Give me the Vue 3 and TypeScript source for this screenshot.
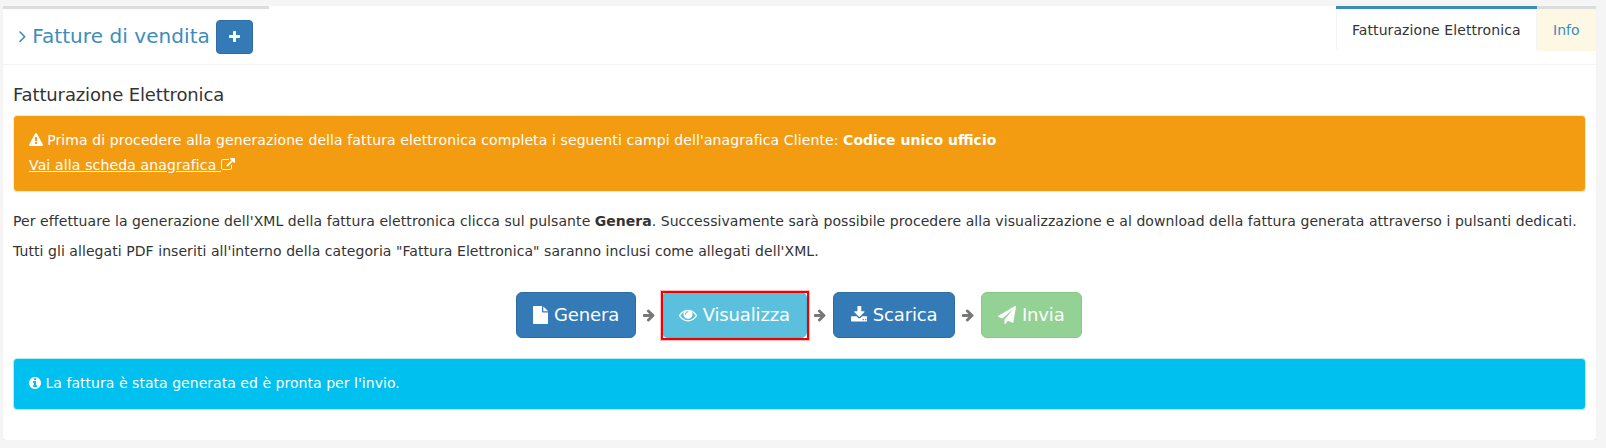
<script setup lang="ts">
import { h, type FunctionalComponent } from 'vue'

interface Glyph {
  x: number
  w: number
  d: string
}

const glyphs: Record<string, Glyph> = {
  angle: { x: 576, w: 640, d: 'M1171 960q0 13-10 23l-466 466q-10 10-23 10t-23-10l-50-50q-10-10-10-23t10-23l393-393-393-393q-10-10-10-23t10-23l50-50q10-10 23-10t23 10l466 466q10 10 10 23z' },
  plus: { x: 192, w: 1408, d: 'M1600 736v192q0 40-28 68t-68 28h-416v416q0 40-28 68t-68 28h-192q-40 0-68-28t-28-68v-416h-416q-40 0-68-28t-28-68v-192q0-40 28-68t68-28h416v-416q0-40 28-68t68-28h192q40 0 68 28t28 68v416h416q40 0 68 28t28 68z' },
  warning: { x: 0, w: 1792, d: 'M1024 1375v-190q0-14-9.5-23.5t-22.5-9.5h-192q-13 0-22.5 9.5t-9.5 23.5v190q0 14 9.5 23.5t22.5 9.5h192q13 0 22.5-9.5t9.5-23.5zm-2-374l18-459q0-12-10-19-13-11-24-11h-220q-11 0-24 11-10 7-10 21l17 457q0 10 10 16.5t24 6.5h185q14 0 23.5-6.5t10.5-16.5zm-14-934l768 1408q35 63-2 126-17 29-46.5 46t-63.5 17h-1536q-34 0-63.5-17t-46.5-46q-37-63-2-126l768-1408q17-31 47-49t65-18 65 18 47 49z' },
  external: { x: 0, w: 1792, d: 'M1408 928v320q0 119-84.5 203.5t-203.5 84.5h-832q-119 0-203.5-84.5t-84.5-203.5v-832q0-119 84.5-203.5t203.5-84.5h704q14 0 23 9t9 23v64q0 14-9 23t-23 9h-704q-66 0-113 47t-47 113v832q0 66 47 113t113 47h832q66 0 113-47t47-113v-320q0-14 9-23t23-9h64q14 0 23 9t9 23zm384-864v512q0 26-19 45t-45 19-45-19l-176-176-652 652q-10 10-23 10t-23-10l-114-114q-10-10-10-23t10-23l652-652-176-176q-19-19-19-45t19-45 45-19h512q26 0 45 19t19 45z' },
  file: { x: 128, w: 1536, d: 'M1152 512v-472q22 14 36 28l408 408q14 14 28 36h-472zm-128 32q0 40 28 68t68 28h544v1056q0 40-28 68t-68 28h-1344q-40 0-68-28t-28-68v-1600q0-40 28-68t68-28h800v544z' },
  eye: { x: 0, w: 1792, d: 'M1664 960q-152-236-381-353 61 104 61 225 0 185-131.5 316.5t-316.5 131.5-316.5-131.5-131.5-316.5q0-121 61-225-229 117-381 353 133 205 333.5 326.5t434.5 121.5 434.5-121.5 333.5-326.5zm-720-384q0-20-14-34t-34-14q-125 0-214.5 89.5t-89.5 214.5q0 20 14 34t34 14 34-14 14-34q0-86 61-147t147-61q20 0 34-14t14-34zm848 384q0 34-20 69-140 230-376.5 368.5t-499.5 138.5-499.5-139-376.5-368q-20-35-20-69t20-69q140-229 376.5-368t499.5-139 499.5 139 376.5 368q20 35 20 69z' },
  download: { x: 64, w: 1664, d: 'M1344 1344q0-26-19-45t-45-19-45 19-19 45 19 45 45 19 45-19 19-45zm256 0q0-26-19-45t-45-19-45 19-19 45 19 45 45 19 45-19 19-45zm128-224v320q0 40-28 68t-68 28h-1472q-40 0-68-28t-28-68v-320q0-40 28-68t68-28h465l135 136q58 56 136 56t136-56l136-136h464q40 0 68 28t28 68zm-325-569q17 41-14 70l-448 448q-18 19-45 19t-45-19l-448-448q-31-29-14-70 17-39 59-39h256v-448q0-26 19-45t45-19h256q26 0 45 19t19 45v448h256q42 0 59 39z' },
  plane: { x: 0, w: 1792, d: 'M1764 11q33 24 27 64l-256 1536q-5 29-32 45-14 8-31 8-11 0-24-5l-453-185-242 295q-18 23-49 23-13 0-22-4-19-7-30.5-23.5t-11.5-36.5v-349l864-1059-1069 925-395-162q-37-14-40-55-2-40 32-59l1664-960q15-9 32-9 20 0 36 11z' },
  arrow: { x: 128, w: 1536, d: 'M1600 960q0 54-37 91l-651 651q-39 37-91 37-51 0-90-37l-75-75q-38-38-38-91t38-91l293-293h-704q-52 0-84.5-37.5t-32.5-90.5v-128q0-53 32.5-90.5t84.5-37.5h704l-293-294q-38-36-38-90t38-90l75-75q38-38 90-38 53 0 91 38l651 651q37 35 37 90z' },
  info: { x: 128, w: 1536, d: 'M1152 1376v-160q0-14-9-23t-23-9h-96v-512q0-14-9-23t-23-9h-320q-14 0-23 9t-9 23v160q0 14 9 23t23 9h96v320h-96q-14 0-23 9t-9 23v160q0 14 9 23t23 9h448q14 0 23-9t9-23zm-128-896v-160q0-14-9-23t-23-9h-192q-14 0-23 9t-9 23v160q0 14 9 23t23 9h192q14 0 23-9t9-23zm640 416q0 209-103 385.5t-279.5 279.5-385.5 103-385.5-103-279.5-279.5-103-385.5 103-385.5 279.5-279.5 385.5-103 385.5 103 279.5 279.5 103 385.5z' },
}

const Icon: FunctionalComponent<{ name: string }> = ({ name }) => {
  const g = glyphs[name]
  return h(
    'svg',
    { class: 'icon', viewBox: `${g.x} 0 ${g.w} 1792`, width: `${g.w / 1792}em`, height: '1em', 'aria-hidden': 'true' },
    [h('path', { d: g.d, fill: 'currentColor' })],
  )
}
Icon.props = ['name']

const steps = [
  { label: 'Genera', icon: 'file', kind: 'primary generate' },
  { label: 'Visualizza', icon: 'eye', kind: 'view' },
  { label: 'Scarica', icon: 'download', kind: 'primary save' },
  { label: 'Invia', icon: 'plane', kind: 'send' },
]
</script>

<template>
  <main class="card">
    <header class="head">
      <div class="title">
        <h1><Icon name="angle" /> Fatture di vendita</h1>
        <button class="add" aria-label="Aggiungi"><Icon name="plus" /></button>
      </div>
      <nav class="tabs">
        <a class="tab active">Fatturazione Elettronica</a>
        <a class="tab info-tab">Info</a>
      </nav>
    </header>

    <section class="body">
      <h2>Fatturazione Elettronica</h2>
      <div class="alert warning">
        <div><Icon name="warning" /> Prima di procedere alla generazione della fattura elettronica completa i seguenti campi dell'anagrafica Cliente: <b>Codice unico ufficio</b></div>
        <div class="second"><a><span class="link">Vai alla scheda anagrafica </span><Icon name="external" /></a></div>
      </div>
      <p><span class="lead">Per effettuare la generazione dell'XML della fattura elettronica clicca sul pulsante </span><b>Genera</b>. Successivamente sarà possibile procedere alla visualizzazione e al download della fattura generata attraverso i pulsanti dedicati.</p>
      <p>Tutti gli allegati PDF inseriti all'interno della categoria "Fattura Elettronica" saranno inclusi come allegati dell'XML.</p>

      <div class="steps">
        <template v-for="(s, i) in steps" :key="s.label">
          <span v-if="i" class="arrow"><Icon name="arrow" /></span>
          <button class="btn" :class="s.kind"><Icon :name="s.icon" /> {{ s.label }}</button>
        </template>
      </div>

      <div class="alert notice"><Icon name="info" /> La fattura è stata generata ed è pronta per l'invio.</div>
    </section>
  </main>
</template>

<style>
body {
  background: #f5f5f5;
  overflow: hidden;
}
.icon {
  vertical-align: -0.1429em;
}
</style>

<style scoped>
.card {
  box-sizing: border-box;
  width: 1593px;
  height: 434px;
  margin: 6px 0 0 3px;
  background: #fff;
  border-radius: 0 0 3px 3px;
  box-shadow: 0 1px 1px rgba(0, 0, 0, 0.1);
  font: 14px/20px "DejaVu Sans", sans-serif;
  color: #333;
}
.head {
  display: flex;
  justify-content: space-between;
  align-items: flex-start;
  box-sizing: border-box;
  height: 59px;
  border-bottom: 1px solid #f4f4f4;
}
.title {
  display: flex;
  box-sizing: border-box;
  width: 266px;
  padding: 11px 0 0 15px;
  border-top: 3px solid #ddd;
  color: #3c8dbc;
}
h1 {
  flex: none;
  width: 198px;
  margin: 3px 0 0;
  padding-left: 0.6px;
  box-sizing: border-box;
  font-size: 20px;
  line-height: 26px;
  font-weight: 400;
  letter-spacing: 0.07px;
  white-space: nowrap;
}
button {
  font-family: inherit;
  color: #fff;
  border: 1px solid;
}
.add {
  width: 37px;
  height: 34px;
  padding: 0;
  font-size: 14px;
  line-height: 20px;
  background: #337ab7;
  border-color: #2e6da4;
  border-radius: 4px;
}
.tabs {
  display: flex;
}
.tab {
  box-sizing: border-box;
  height: 45px;
  padding: 11px 15px 0;
  border-top: 3px solid #ddd;
  white-space: nowrap;
}
.active {
  width: 201px;
  height: 44px;
  border-top-color: #3c8dbc;
  box-shadow: inset 1px 0 #f4f4f4, inset -1px 0 #f4f4f4;
  padding-left: 16px;
  letter-spacing: 0.08px;
}
.info-tab {
  width: 59px;
  padding-left: 16px;
  background: #fcf8e3;
  border-top-color: #dcdddf;
  color: #3c8dbc;
}
.body {
  padding: 20px 10px 0;
}
h2 {
  margin: 0 0 10px;
  font-size: 18px;
  line-height: 20px;
  font-weight: 400;
  letter-spacing: -0.13px;
}
.alert {
  box-sizing: border-box;
  padding: 14px 15px 15px;
  border: 1px solid;
  border-radius: 4px;
  color: #fff;
}
.warning {
  height: 77px;
  margin-bottom: 19px;
  background: #f39c12;
  border-color: #faebcc;
  letter-spacing: 0.106px;
}
.warning b {
  letter-spacing: 0;
}
.warning .icon {
  margin-right: -0.4px;
}
.second {
  margin-top: 5px;
  letter-spacing: 0.15px;
}
.link {
  text-decoration: underline;
  white-space: pre;
}
p {
  margin: 0 0 10px;
  white-space: nowrap;
  letter-spacing: 0.064px;
}
.lead {
  letter-spacing: 0.078px;
}
p b {
  letter-spacing: 0;
}
.steps {
  display: flex;
  justify-content: center;
  align-items: center;
  height: 46px;
  margin: 31px 1px 20px 0;
}
.btn {
  box-sizing: border-box;
  height: 46px;
  padding: 0;
  font-size: 18px;
  line-height: 24px;
  letter-spacing: -0.15px;
  border-radius: 6px;
  white-space: nowrap;
}
.primary {
  background: #337ab7;
  border-color: #2e6da4;
}
.generate {
  width: 120px;
}
.save {
  width: 122px;
}
.view {
  position: relative;
  width: 145px;
  background: #5bc0de;
  border-color: #46b8da;
}
/* Square highlight frame around the rounded button */
.view::after {
  content: "";
  position: absolute;
  inset: -2px -3px -3px -2px;
  border: 2px solid #f00000;
  box-shadow: 0 0 0 1px rgba(240, 0, 0, 0.25);
}
.send {
  width: 101px;
  background: #94d194;
  border-color: #86c886;
}
.arrow {
  width: 26px;
  text-align: center;
  color: #777;
}
.notice {
  height: 52px;
  background: #00c0ef;
  border-color: #bce8f1;
  letter-spacing: 0.04px;
}
</style>
